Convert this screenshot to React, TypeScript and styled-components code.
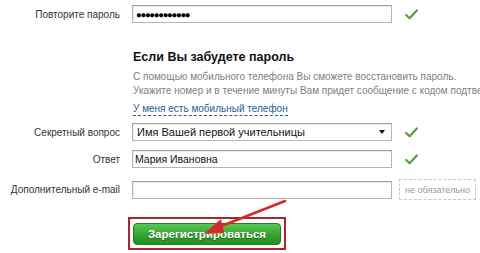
import React from "react";
import styled, { createGlobalStyle } from "styled-components";

const Global = createGlobalStyle`
  html, body { margin: 0; padding: 0; background: #fff; }
  body { font-family: Arial, "Liberation Sans", sans-serif; width: 480px; height: 253px; overflow: hidden; }
`;

const Page = styled.div`
  position: relative;
  width: 480px;
  height: 253px;
  padding-top: 5px;
  box-sizing: border-box;
  overflow: hidden;
`;

const Row = styled.div<{ $mt?: number }>`
  display: grid;
  grid-template-columns: 120px 260px 14px auto;
  column-gap: 12px;
  align-items: center;
  height: 18px;
  margin-top: ${(p) => p.$mt ?? 0}px;
`;

const Label = styled.div`
  text-align: right;
  font-size: 10px;
  color: #333;
  white-space: nowrap;
`;

const Field = styled.div<{ $size?: number }>`
  box-sizing: border-box;
  height: 18px;
  border: 1px solid #b5b5b5;
  border-top-color: #a0a0a0;
  background: #fff;
  box-shadow: inset 1px 1px 1px rgba(0,0,0,0.08);
  display: flex;
  align-items: center;
  padding: 0 2px;
  font-size: ${(p) => p.$size ?? 10.5}px;
  color: #111;
  white-space: nowrap;
  overflow: hidden;
`;

const Dots = styled.span`
  font-size: 9.5px;
  letter-spacing: -1.3px;
  font-weight: bold;
  color: #000;
  padding-left: 1px;
`;

const SelectBox = styled(Field)`
  justify-content: space-between;
  padding-left: 4px;
  padding-right: 6px;
`;

const Caret = styled.span`
  width: 0;
  height: 0;
  border-left: 3.5px solid transparent;
  border-right: 3.5px solid transparent;
  border-top: 4px solid #111;
`;

const Check = styled.svg`
  width: 13px;
  height: 11px;
  margin-left: 1px;
`;

const Optional = styled.div`
  grid-column: 3 / span 2;
  box-sizing: border-box;
  margin-left: -5px;
  width: 77px;
  height: 21px;
  border: 1px dashed #c8c8c8;
  display: flex;
  align-items: center;
  justify-content: center;
  font-size: 9px;
  color: #999;
  white-space: nowrap;
`;

const Info = styled.div`
  margin-left: 133px;
  margin-top: 27px;
  white-space: nowrap;
`;

const Heading = styled.div`
  font-size: 12.5px;
  font-weight: bold;
  color: #111;
  line-height: 15px;
`;

const Hint = styled.div`
  margin-top: 5px;
  font-size: 10px;
  color: #808080;
  line-height: 14px;
`;

const Link = styled.span`
  display: inline-block;
  margin-top: 4px;
  font-size: 10px;
  color: #2a5d8f;
  border-bottom: 1px dashed #2a5d8f;
  line-height: 12px;
`;

const Submit = styled.div`
  margin-left: 128px;
  margin-top: 20px;
  width: 158px;
  height: 33px;
  box-sizing: border-box;
  border: 2px solid #a8262c;
  display: flex;
  align-items: center;
  justify-content: center;
`;

const GreenButton = styled.div`
  width: 148px;
  height: 22px;
  border-radius: 4px;
  background: linear-gradient(#5cc656 0%, #36a631 50%, #23901f 100%);
  border: 1px solid #1f7f1b;
  box-sizing: border-box;
  color: #fff;
  font-weight: bold;
  font-size: 11.5px;
  display: flex;
  align-items: center;
  justify-content: center;
  text-shadow: 0 1px 1px rgba(0,0,0,0.35);
`;

const Arrow = styled.svg`
  position: absolute;
  left: 0;
  top: 0;
  width: 480px;
  height: 253px;
  pointer-events: none;
`;

const CheckIcon = () => (
  <Check viewBox="0 0 13 11">
    <path d="M1.2 6 L4.6 9.3 L11.8 1.4" fill="none" stroke="#5a9e3c" strokeWidth="2.2" strokeLinecap="round" strokeLinejoin="round" />
  </Check>
);

export default function App() {
  return (
    <>
      <Global />
      <Page>
        <Row>
          <Label>Повторите пароль</Label>
          <Field><Dots>●●●●●●●●●●●●</Dots></Field>
          <CheckIcon />
        </Row>
        <Info>
          <Heading>Если Вы забудете пароль</Heading>
          <Hint>
            С помощью мобильного телефона Вы сможете восстановить пароль.
            <br />
            Укажите номер и в течение минуты Вам придет сообщение с кодом подтверждения.
          </Hint>
          <Link>У меня есть мобильный телефон</Link>
        </Info>
        <Row $mt={7}>
          <Label>Секретный вопрос</Label>
          <SelectBox $size={11}>Имя Вашей первой учительницы<Caret /></SelectBox>
          <CheckIcon />
        </Row>
        <Row $mt={9}>
          <Label>Ответ</Label>
          <Field>Мария Ивановна</Field>
          <CheckIcon />
        </Row>
        <Row $mt={11}>
          <Label>Дополнительный e-mail</Label>
          <Field />
          <Optional>не обязательно</Optional>
        </Row>
        <Submit>
          <GreenButton>Зарегистрироваться</GreenButton>
        </Submit>
        <Arrow viewBox="0 0 480 253">
          <line x1="285" y1="201" x2="214" y2="229" stroke="#d42a2a" strokeWidth="2.6" strokeLinecap="round" />
          <polygon points="204,234 221,219 224,233" fill="#d42a2a" />
        </Arrow>
      </Page>
    </>
  );
}
